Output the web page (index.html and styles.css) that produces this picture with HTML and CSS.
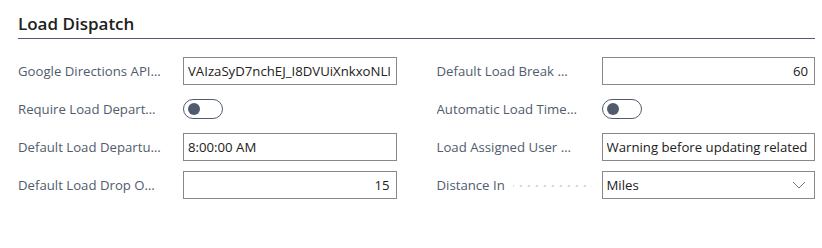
FILE: index.html
```html
<!DOCTYPE html>
<html lang="en">
<head>
    <meta charset="UTF-8">
    <meta name="viewport" content="width=device-width, initial-scale=1.0">
    <title>Load Dispatch</title>
    <link rel="stylesheet" href="styles.css">
</head>
<body>
    <section class="card">
        <h2 class="card-title">Load Dispatch</h2>

        <div class="card-fields">
            <div class="field-column">
                <div class="field">
                    <label class="field-label"><span class="label-text">Google Directions API Key</span><span class="leader"></span></label>
                    <div class="field-input"><span class="value">VAIzaSyD7nchEJ_I8DVUiXnkxoNLIcQ</span></div>
                </div>
                <div class="field">
                    <label class="field-label"><span class="label-text">Require Load Departure Time</span><span class="leader"></span></label>
                    <div class="toggle"><span class="toggle-thumb"></span></div>
                </div>
                <div class="field">
                    <label class="field-label"><span class="label-text">Default Load Departure Time</span><span class="leader"></span></label>
                    <div class="field-input"><span class="value">8:00:00 AM</span></div>
                </div>
                <div class="field">
                    <label class="field-label"><span class="label-text">Default Load Drop Off Minutes</span><span class="leader"></span></label>
                    <div class="field-input number"><span class="value">15</span></div>
                </div>
            </div>

            <div class="field-column">
                <div class="field">
                    <label class="field-label"><span class="label-text">Default Load Break Minutes</span><span class="leader"></span></label>
                    <div class="field-input number"><span class="value">60</span></div>
                </div>
                <div class="field">
                    <label class="field-label"><span class="label-text">Automatic Load Time Calculation</span><span class="leader"></span></label>
                    <div class="toggle"><span class="toggle-thumb"></span></div>
                </div>
                <div class="field">
                    <label class="field-label"><span class="label-text">Load Assigned User Update</span><span class="leader"></span></label>
                    <div class="field-input"><span class="value">Warning before updating related records</span></div>
                </div>
                <div class="field">
                    <label class="field-label"><span class="label-text">Distance In</span><span class="leader"></span></label>
                    <div class="field-input select">
                        <span class="value">Miles</span>
                        <svg class="chevron" width="14" height="8" viewBox="0 0 14 8">
                            <path d="M1 1 L7 7 L13 1" fill="none" stroke="#7a7774" stroke-width="1"/>
                        </svg>
                    </div>
                </div>
            </div>
        </div>
    </section>
</body>
</html>
```

FILE: styles.css
```css
* {
    margin: 0;
    padding: 0;
    box-sizing: border-box;
}

body {
    font-family: 'Segoe UI', 'Open Sans', sans-serif;
    background: #fff;
    color: #212121;
    padding: 12px 7px 0 18px;
}

.card-title {
    font-size: 17px;
    font-weight: 600;
    color: #212121;
    line-height: 24px;
    padding-bottom: 2px;
    border-bottom: 1px solid #505c6d;
}

.card-fields {
    display: grid;
    grid-template-columns: minmax(0, 1fr) minmax(0, 1fr);
    column-gap: 40px;
    margin-top: 18px;
}

.field-column {
    display: flex;
    flex-direction: column;
    gap: 10px;
    min-width: 0;
}

.field {
    display: flex;
    align-items: center;
    height: 28px;
}

.field-label {
    width: 165px;
    flex-shrink: 0;
    display: flex;
    align-items: center;
    font-size: 13.2px;
    color: #505c6d;
}

.label-text {
    max-width: 143px;
    white-space: nowrap;
    overflow: hidden;
    text-overflow: ellipsis;
}

.leader {
    flex: 1;
    min-width: 2px;
    height: 2px;
    margin: 2px 10px 0 8px;
    background-image: linear-gradient(to right, #d4d4d4 2px, transparent 2px);
    background-size: 8px 2px;
    background-position: right center;
    background-repeat: repeat-x;
}

.field-input {
    flex: 1;
    min-width: 0;
    height: 28px;
    border: 1px solid #8a8886;
    background: #fff;
    display: flex;
    align-items: center;
    padding: 0 6px 0 4px;
    font-size: 13.2px;
    color: #212121;
    overflow: hidden;
}

.field-input .value {
    min-width: 0;
    white-space: nowrap;
    overflow: hidden;
}

.field-input.number {
    justify-content: flex-end;
}

.field-input.select {
    justify-content: space-between;
    padding-right: 8px;
}

.chevron {
    flex-shrink: 0;
}

.toggle {
    width: 40px;
    height: 20px;
    border: 1px solid #505c6d;
    border-radius: 10px;
    display: flex;
    align-items: center;
    padding-left: 4px;
}

.toggle-thumb {
    width: 12px;
    height: 12px;
    border-radius: 50%;
    background: #505c6d;
}
```
